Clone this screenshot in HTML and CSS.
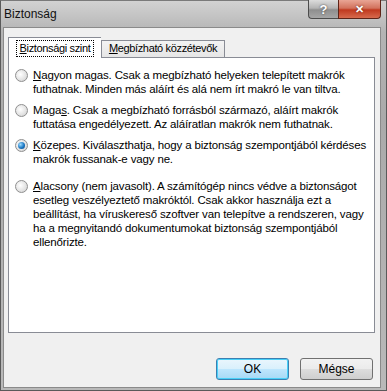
FILE: index.html
```html
<!DOCTYPE html>
<html lang="hu">
<head>
  <meta charset="UTF-8">
  <title>Biztonság</title>
  <link rel="stylesheet" href="styles.css">
</head>
<body>
  <div class="window">
    <!-- Title bar -->
    <div class="titlebar">
      <span class="title">Biztonság</span>
      <div class="caption">
        <span class="cap-btn help">?</span>
        <span class="cap-btn close">&#x2715;</span>
      </div>
    </div>

    <div class="client">
      <div class="tabs">
        <div class="tab active"><span class="focus"><u>B</u>iztonsági szint</span></div>
        <div class="tab"><u>M</u>egbízható közzétevők</div>
      </div>

      <div class="panel">
        <label class="option">
          <span class="radio"></span>
          <span class="text"><u>N</u>agyon magas. Csak a megbízható helyeken telepített makrók<br>futhatnak. Minden más aláírt és alá nem írt makró le van tiltva.</span>
        </label>
        <label class="option">
          <span class="radio"></span>
          <span class="text">Maga<u>s</u>. Csak a megbízható forrásból származó, aláírt makrók<br>futtatása engedélyezett. Az aláíratlan makrók nem futhatnak.</span>
        </label>
        <label class="option">
          <span class="radio checked"></span>
          <span class="text"><u>K</u>özepes. Kiválaszthatja, hogy a biztonság szempontjából kérdéses<br>makrók fussanak-e vagy ne.</span>
        </label>
        <label class="option last">
          <span class="radio"></span>
          <span class="text"><u>A</u>lacsony (nem javasolt). A számítógép nincs védve a biztonságot<br>esetleg veszélyeztető makróktól. Csak akkor használja ezt a<br>beállítást, ha víruskereső szoftver van telepítve a rendszeren, vagy<br>ha a megnyitandó dokumentumokat biztonság szempontjából<br>ellenőrizte.</span>
        </label>
      </div>

      <div class="buttons">
        <button class="button default">OK</button>
        <button class="button">Mégse</button>
      </div>
    </div>
  </div>
</body>
</html>
```

FILE: styles.css
```css
/* Global styles */
body {
  margin: 0;
  padding: 0;
  font-family: "Liberation Sans", Arial, sans-serif;
  font-size: 11.5px;
  letter-spacing: -0.15px;
  color: #000;
  background: #b8b8b8;
}

/* Outer window frame */
.window {
  width: 387px;
  height: 391px;
  box-sizing: border-box;
  display: flex;
  flex-direction: column;
  background: linear-gradient(#d2d2d2, #b4b4b4 8%, #aaaaaa 30%, #b9b9b9 100%);
  border: 1px solid #5a5a5a;
  border-top-color: #7a7a7a;
}

.titlebar {
  height: 26px;
  display: flex;
  justify-content: space-between;
  align-items: flex-start;
}

.title {
  margin: 6px 0 0 3px;
  font-size: 12px;
  letter-spacing: 0;
  color: #111;
}

.caption {
  display: flex;
  margin-right: 5px;
  margin-top: -1px;
}

.cap-btn {
  height: 19px;
  box-sizing: border-box;
  display: flex;
  align-items: center;
  justify-content: center;
  color: #fff;
  font-weight: bold;
  border: 1px solid #4c4c4c;
  border-top: none;
}

.help {
  width: 30px;
  font-size: 13px;
  border-radius: 0 0 0 4px;
  border-right: none;
  background: linear-gradient(#dcdcdc, #b4b4b4 45%, #8e8e8e 55%, #a6a6a6);
  text-shadow: 0 0 2px #333;
}

.close {
  width: 43px;
  font-size: 11px;
  border-color: #5e2418;
  border-radius: 0 0 4px 0;
  background: linear-gradient(#e9a595, #d2725d 45%, #c0391f 55%, #d76a4d);
  text-shadow: 0 0 2px #5a1408;
}

/* Client area */
.client {
  flex: 1;
  margin: 0 5px 2px 2px;
  background: #f0f0f0;
  border: 1px solid #8a8a8a;
  display: flex;
  flex-direction: column;
}

.tabs {
  display: flex;
  align-items: flex-end;
  margin: 9px 0 0 4px;
  position: relative;
  z-index: 1;
}

.tab {
  width: 124px;
  height: 17px;
  box-sizing: border-box;
  padding-top: 1px;
  font-size: 11px;
  letter-spacing: -0.35px;
  text-align: center;
  border: 1px solid #898c95;
  border-bottom: none;
  background: linear-gradient(#f3f3f3, #e6e6e6);
  white-space: nowrap;
}

.tab.active {
  width: 93px;
  height: 21px;
  padding-top: 2px;
  background: #fff;
  margin-bottom: -1px;
  border-right: none;
}

.focus {
  display: inline-block;
  padding: 1px 3px 2px;
  border: 1px dotted #000;
}

/* Tab page */
.panel {
  height: 276px;
  box-sizing: border-box;
  margin: 0 5px 0 4px;
  padding: 10px 0 0 6px;
  background: #fff;
  border: 1px solid #898c95;
}

.option {
  display: flex;
  align-items: flex-start;
  margin-bottom: 7px;
}

.option:nth-child(3) {
  margin-bottom: 13px;
}

.radio {
  flex: none;
  width: 13px;
  height: 13px;
  box-sizing: border-box;
  margin: 1px 5px 0 0;
  border-radius: 50%;
  border: 1px solid #8f8f8f;
  background: radial-gradient(circle at 40% 40%, #ffffff, #e2e2e2 60%, #c9c9c9);
  display: flex;
  align-items: center;
  justify-content: center;
}

.radio.checked::after {
  content: "";
  width: 7px;
  height: 7px;
  border-radius: 50%;
  background: radial-gradient(circle at 35% 35%, #9fdcff, #1b78c4 55%, #0a3f7a);
}

.text {
  line-height: 14px;
  white-space: nowrap;
  color: #000;
}

/* Dialog buttons */
.buttons {
  display: flex;
  justify-content: flex-end;
  gap: 11px;
  margin: 25px 7px 0 0;
}

.button {
  width: 73px;
  height: 22px;
  padding: 0;
  font-family: inherit;
  font-size: 12px;
  letter-spacing: 0;
  color: #000;
  border: 1px solid #707070;
  border-radius: 3px;
  background: linear-gradient(#f2f2f2, #ebebeb 50%, #dddddd 51%, #cfcfcf);
}

.button.default {
  border-color: #3c7fb1;
  box-shadow: inset 0 0 0 1px #48d0f8;
  background: linear-gradient(#eaf6fd, #d9f0fc 50%, #bee6fd 51%, #a7d9f5);
}
```
